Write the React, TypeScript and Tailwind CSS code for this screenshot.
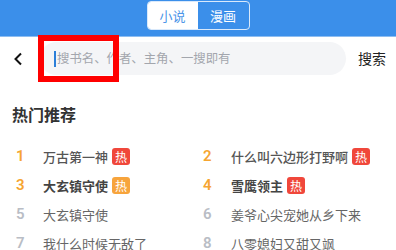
import React from "react";

type Item = { n: number; title: string; badge?: "red" | "orange"; strong?: boolean };

const items: Item[] = [
  { n: 1, title: "万古第一神", badge: "red" },
  { n: 2, title: "什么叫六边形打野啊", badge: "red" },
  { n: 3, title: "大玄镇守使", badge: "orange", strong: true },
  { n: 4, title: "雪鹰领主", badge: "red", strong: true },
  { n: 5, title: "大玄镇守使" },
  { n: 6, title: "姜爷心尖宠她从乡下来" },
  { n: 7, title: "我什么时候无敌了" },
  { n: 8, title: "八零媳妇又甜又飒" },
];

function Row({ item, right }: { item: Item; right?: boolean }) {
  const hot = item.n <= 4;
  return (
    <div className={`flex items-center h-[29px] ${right ? "" : "pl-[16px]"}`}>
      <span
        className={`${right ? "w-[28px]" : "w-[27px]"} text-[15px] font-semibold font-['Roboto',sans-serif] ${
          hot ? "text-[#f6a531]" : "text-[#b9bdc5]"
        }`}
      >
        {item.n}
      </span>
      <span
        className={`text-[13px] leading-none ${
          item.strong ? "font-semibold text-[#444]" : hot ? "text-[#555] font-medium" : "text-[#666]"
        }`}
      >
        {item.title}
      </span>
      {item.badge && (
        <span
          className={`ml-[4px] w-[18px] h-[17px] rounded-[3px] flex items-center justify-center text-[12px] text-white leading-none ${
            item.badge === "red" ? "bg-[#f0473b]" : "bg-[#f7a43c]"
          }`}
        >
          热
        </span>
      )}
    </div>
  );
}

export default function App() {
  return (
    <div className="relative w-[396px] h-[250px] overflow-hidden bg-white font-['Noto_Sans_CJK_SC',sans-serif]">
      {/* top tabs */}
      <div className="h-[37px] bg-[#3b8fea] border-b border-[#8dbdf1] flex justify-center pt-[1px]">
        <div className="flex h-[29px] border border-[#d9e9fb] rounded-[4px] overflow-hidden">
          <div className="w-[50px] bg-white text-[#4d96e8] text-[13px] flex items-center justify-center">小说</div>
          <div className="w-[51px] text-white text-[13px] flex items-center justify-center">漫画</div>
        </div>
      </div>

      {/* search row */}
      <div className="flex items-center h-[43px]">
        <div className="w-[40px] flex justify-center">
          <svg width="10" height="14" viewBox="0 0 10 14" className="ml-[-4px]">
            <path d="M8 1.5 L2.5 7 L8 12.5" fill="none" stroke="#111" strokeWidth="2" />
          </svg>
        </div>
        <div className="w-[306px] h-[33px] rounded-full bg-[#f4f5f7] flex items-center pl-[14px]">
          <span className="w-[2px] h-[16px] bg-[#2b7fd9] mr-[1px]" />
          <span className="text-[12.4px] text-[#a3a6ad]">搜书名、作者、主角、一搜即有</span>
        </div>
        <div className="flex-1 text-center text-[14px] text-[#222] pl-[2px]">搜索</div>
      </div>

      <div className="pl-[12px] mt-[23px] text-[16px] font-bold text-[#333] leading-[22px]">热门推荐</div>

      <div className="grid grid-cols-[203px_1fr] mt-[17px]">
        {items.map((it, i) => (
          <Row key={it.n} item={it} right={i % 2 === 1} />
        ))}
      </div>

      {/* red annotation box */}
      <div className="absolute left-[38px] top-[35px] w-[81px] h-[47px] border-[6px] border-[#ff0000]" />
    </div>
  );
}
